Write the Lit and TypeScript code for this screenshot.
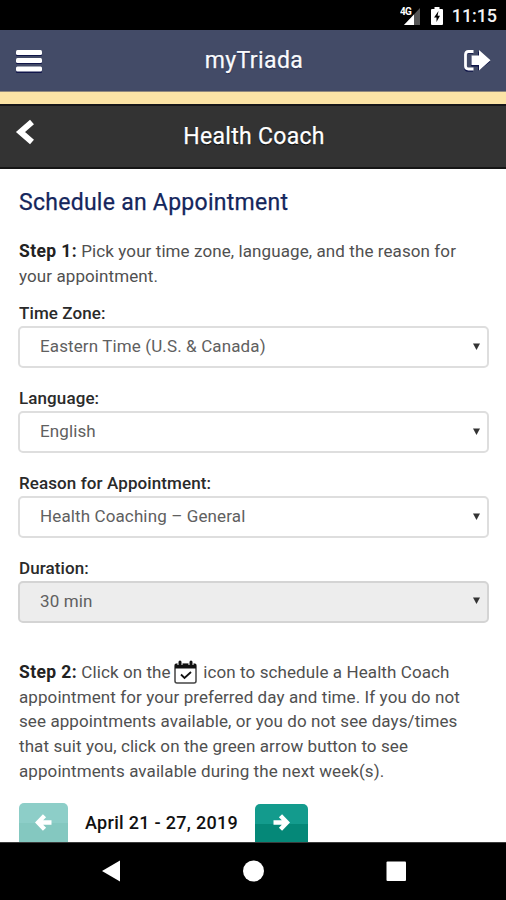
import { LitElement, html, css, svg } from "lit";
import { customElement, property } from "lit/decorators.js";

@customElement("select-field")
class SelectField extends LitElement {
  @property() label = "";
  @property() value = "";
  @property({ type: Boolean }) disabled = false;

  static styles = css`
    :host { display: block; height: 84.8px; }
    .label { height: 25px; line-height: 26px; padding-left: 1px; font-size: 17px; font-weight: 500; color: #2a2a2a; letter-spacing: 0.1px; }
    .box {
      box-sizing: border-box; height: 42px; margin-top: 1px; padding: 0 7px 2px 20px;
      display: flex; align-items: center; justify-content: space-between;
      border: 2px solid #dedede; border-radius: 5px; background: #fff;
      font-size: 17px; letter-spacing: 0.12px; color: #606060;
    }
    .disabled { background: #ededed; border-color: #d4d4d4; }
    svg { display: block; width: 7px; height: 7px; }
  `;

  render() {
    return html`
      <div class="label">${this.label}</div>
      <div class="box ${this.disabled ? "disabled" : ""}">
        <span>${this.value}</span>
        <svg viewBox="0 0 7 7"><path d="M0 .5H7L3.5 7Z" fill="#333" /></svg>
      </div>
    `;
  }
}

const arrow = svg`<path d="M.5 8.5H14M7.5 1.8L14 8.5L7.5 15.2" fill="none" stroke="#fff" stroke-width="4.4" />`;

@customElement("app-root")
class AppRoot extends LitElement {
  static styles = css`
    :host {
      display: flex; flex-direction: column; width: 506px; height: 900px; overflow: hidden;
      background: #fff; font-family: Roboto, "Liberation Sans", sans-serif;
    }
    svg { display: block; flex: none; }
    .status {
      height: 30px; flex: none; background: #000; color: #f4f4f4; box-sizing: border-box;
      display: flex; align-items: center; justify-content: flex-end; padding: 1px 9px 0 0;
      font-size: 18px; font-weight: 500; letter-spacing: -0.1px;
    }
    .signal { margin-right: 9px; }
    .battery { margin-right: 9px; }
    .net { font-size: 10px; font-weight: 700; letter-spacing: -0.7px; }
    .bar {
      height: 61px; flex: none; background: #434b67; box-sizing: border-box;
      display: grid; grid-template-columns: 60px 1fr 60px; align-items: center;
      color: #f8f9fc; font-size: 23px; letter-spacing: 0.4px; text-align: center;
      text-shadow: 0 1px 1px #1a2145;
    }
    .bar span, .sub span { padding-left: 2px; -webkit-text-stroke: 0.25px #fff; }
    .menu { margin-left: 15px; }
    .exit { margin-left: 17px; }
    .stripe { height: 13px; flex: none; box-sizing: border-box; background: #fce4a6; border-top: 1px solid #8f887f; }
    .sub {
      height: 65px; flex: none; box-sizing: border-box; background: #333; color: #fff;
      border-top: 2px solid #16161a; border-bottom: 2px solid #151515;
      display: grid; grid-template-columns: 60px 1fr 60px; align-items: center; text-align: center;
      font-size: 23px; letter-spacing: 0.3px; text-shadow: 0 1px 1px #000;
    }
    .back { margin: 0 0 9px 15px; }
    .content { flex: 1; min-height: 0; overflow: hidden; padding: 18px 17px 0 18px; color: #505050; }
    h1 { margin: 0 0 21px 1px; font-size: 23px; line-height: 31px; font-weight: 400; color: #14265c; letter-spacing: 0.27px; -webkit-text-stroke: 0.25px #14265c; }
    p { margin: 0 0 0 1px; font-size: 17px; line-height: 24.7px; letter-spacing: 0.09px; white-space: nowrap; }
    b { color: #222; font-weight: 700; font-size: 17.5px; line-height: 1; letter-spacing: 0.38px; }
    .fields { margin-top: 12px; }
    .step2 { margin-top: 20px; }
    .cal { display: inline-block; vertical-align: -7px; margin: -9px 2px 0 -1px; position: relative; top: -4.5px; left: 0.5px; }
    .step2 .cal { margin-bottom: -4px; }
    .week { display: flex; align-items: flex-start; margin: 20px 0 0 1px; }
    .btn { width: 49px; height: 46px; border-radius: 5px; display: flex; justify-content: center; box-sizing: border-box; padding-top: 11px; }
    .prev { background: linear-gradient(#8dcec8 0 20px, #84c8c0 20px); }
    .next { width: 53px; margin-top: 1px; padding-top: 10px; background: linear-gradient(#139b8d 0 20px, #058878 20px); }
    .range { width: 187px; text-align: center; font-size: 18px; font-weight: 500; line-height: 39px; color: #111; letter-spacing: 0.3px; }
    .nav { height: 58px; flex: none; background: #000; }
  `;

  render() {
    return html`
      <div class="status">
        <svg class="signal" width="22" height="20" viewBox="0 0 22 20">
          <path d="M20 2V19H4Z" fill="#555" /><path d="M14 8.5V19H4Z" fill="#fff" />
          <text class="net" x="0" y="8.5" fill="#fff">4G</text>
        </svg>
        <svg class="battery" width="12" height="20" viewBox="0 0 12 20">
          <path d="M3.5 1H8.5V3H11Q12 3 12 4V18Q12 19 11 19H1Q0 19 0 18V4Q0 3 1 3H3.5Z" fill="#fff" />
          <path d="M7.5 5L3 11.5H5.5V16L9 9.8H6.6Z" fill="#000" />
        </svg>
        <span>11:15</span>
      </div>
      <div class="bar">
        <svg class="menu" width="28" height="26" viewBox="0 0 28 26">
          <g fill="#11164a"><rect x="1" y="3" width="26" height="5" rx="1" /><rect x="1" y="11" width="26" height="5" rx="1" /><rect x="1" y="20" width="26" height="5" rx="1" /></g>
          <g fill="#fff"><rect x="1" y="2" width="26" height="5" rx="1.5" /><rect x="1" y="10" width="26" height="5" rx="1.5" /><rect x="1" y="18.5" width="26" height="5" rx="1.5" /></g>
        </svg>
        <span>myTriada</span>
        <svg class="exit" width="30" height="24" viewBox="0 0 30 24">
          <g transform="translate(0 1)" fill="#11164a" stroke="#11164a"><path d="M10 2.5H5Q2.5 2.5 2.5 5V18Q2.5 20.5 5 20.5H10" fill="none" stroke-width="2.6" /><path d="M8.5 6.5H15.5V2L27 11.5L15.5 20V16H8.5Z" /></g>
          <path d="M10.5 2.5H5.5Q2.5 2.5 2.5 5.5V17Q2.5 20 5.5 20H10.5" fill="none" stroke="#fff" stroke-width="2.8" />
          <path d="M8.5 6.5H16V1L27.5 11.2L16 21.5V16H8.5Z" fill="#fff" />
        </svg>
      </div>
      <div class="stripe"></div>
      <div class="sub">
        <svg class="back" width="22" height="28" viewBox="0 0 22 28">
          <path d="M17 4L5.5 14L17 24" fill="none" stroke="#fff" stroke-width="6" />
        </svg>
        <span>Health Coach</span>
      </div>
      <div class="content">
        <h1>Schedule an Appointment</h1>
        <p><b>Step 1:</b> Pick your time zone, language, and the reason for<br />your appointment.</p>
        <div class="fields">
          <select-field label="Time Zone:" value="Eastern Time (U.S. &amp; Canada)"></select-field>
          <select-field label="Language:" value="English"></select-field>
          <select-field label="Reason for Appointment:" value="Health Coaching – General"></select-field>
          <select-field label="Duration:" value="30 min" disabled></select-field>
        </div>
        <p class="step2"><b>Step 2:</b> Click on the <svg class="cal" width="23" height="24" viewBox="0 0 23 24">
            <rect x="1" y="4" width="21" height="19" rx="2" fill="#fff" stroke="#444" stroke-width="1.5" />
            <path d="M1 4H22V8.5H1Z" fill="#111" />
            <path d="M6 0V5M17 0V5" stroke="#fff" stroke-width="5" /><path d="M6 2V6M17 2V6" stroke="#111" stroke-width="3" stroke-linecap="round" />
            <path d="M7 14.5L10.5 18L17 12" fill="none" stroke="#111" stroke-width="1.8" />
          </svg> icon to schedule a Health Coach<br />appointment for your preferred day and time. If you do not<br />see appointments available, or you do not see days/times<br />that suit you, click on the green arrow button to see<br />appointments available during the next week(s).</p>
        <div class="week">
          <div class="btn prev"><svg width="17" height="17" viewBox="0 0 17 17"><g transform="translate(17 0) scale(-1 1)">${arrow}</g></svg></div>
          <div class="range">April 21 - 27, 2019</div>
          <div class="btn next"><svg width="17" height="17" viewBox="0 0 17 17">${arrow}</svg></div>
        </div>
      </div>
      <svg class="nav" width="506" height="58" viewBox="0 0 506 58">
        <path d="M0 0H506" stroke="#777" stroke-width="1" />
        <path d="M102 29L120 18.5V39.5Z" fill="#fff" />
        <circle cx="253.5" cy="29" r="10.5" fill="#fff" />
        <rect x="386.5" y="19.5" width="19.5" height="19.5" rx="1" fill="#fff" />
      </svg>
    `;
  }
}
